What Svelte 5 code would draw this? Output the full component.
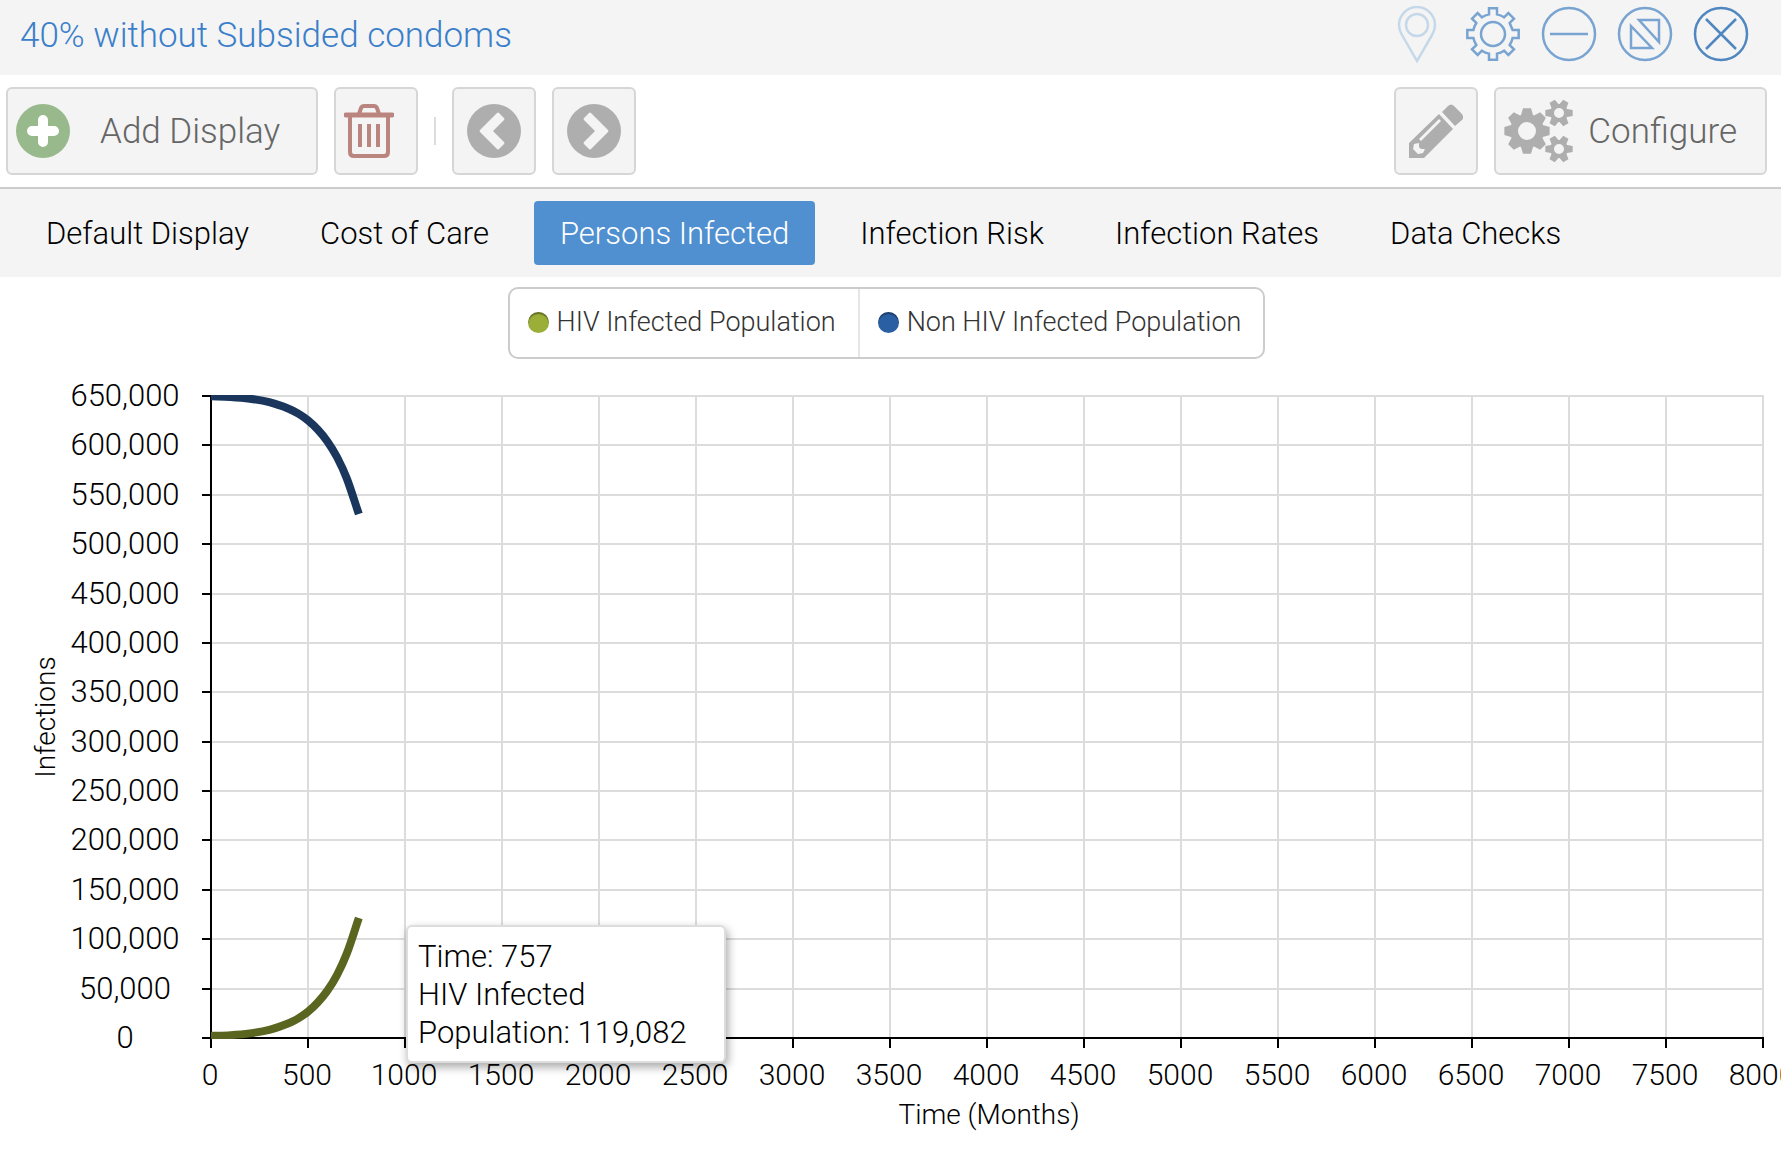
<script>
  const tabs = ['Default Display', 'Cost of Care', 'Persons Infected', 'Infection Risk', 'Infection Rates', 'Data Checks'];
  let active = $state(2);

  const legend = [
    { name: 'HIV Infected Population', tone: 'olive' },
    { name: 'Non HIV Infected Population', tone: 'blue' }
  ];

  // Infected persons by month; the healthy population is the remainder.
  const population = 652000;
  const maxY = 650000;
  const infected = [
    [0, 2200], [100, 2900], [200, 4700], [300, 8300], [400, 14900], [450, 19900], [500, 26700],
    [550, 36000], [600, 48000], [650, 64000], [700, 85500], [762, 121500]
  ];

  let width = $state(1781);
  const left = 211;
  const top = 30;
  const bottom = 672;
  const maxX = 8000;
  let right = $derived(width - 18);
  const x = (t) => left + (t / maxX) * (right - left);
  const y = (v) => bottom - (v / maxY) * (bottom - top);

  const xTicks = Array.from({ length: 17 }, (_, i) => i * 500);
  const yTicks = Array.from({ length: 14 }, (_, i) => i * 50000);

  // Smooth curve through the points; handles follow the slope so uneven steps stay smooth.
  function curve(points) {
    const last = points.length - 1;
    const slope = points.map((p, i) => {
      const a = points[Math.max(i - 1, 0)];
      const b = points[Math.min(i + 1, last)];
      return (b[1] - a[1]) / (b[0] - a[0]);
    });
    let d = `M${points[0][0]} ${points[0][1]}`;
    for (let i = 0; i < last; i++) {
      const [x0, y0] = points[i];
      const [x1, y1] = points[i + 1];
      const h = (x1 - x0) / 3;
      d += `C${x0 + h} ${y0 + h * slope[i]} ${x1 - h} ${y1 - h * slope[i + 1]} ${x1} ${y1}`;
    }
    return d;
  }
  let sickPath = $derived(curve(infected.map(([t, v]) => [x(t), y(v)])));
  let healthyPath = $derived(curve(infected.map(([t, v]) => [x(t), y(population - v)])));

  // Outline of a cog: n teeth, tip radius, root radius, half widths at tip and root.
  function cog(cx, cy, n, tip, root, tipHalf, rootHalf, turn = 0) {
    let d = '';
    for (let i = 0; i < n; i++) {
      const a = turn + (i * 2 * Math.PI) / n;
      const at = (r, h) => {
        const along = Math.sqrt(r * r - h * h);
        return `${(cx + along * Math.cos(a) - h * Math.sin(a)).toFixed(2)} ${(cy + along * Math.sin(a) + h * Math.cos(a)).toFixed(2)}`;
      };
      d += i ? `A${root} ${root} 0 0 1 ${at(root, -rootHalf)}` : `M${at(root, -rootHalf)}`;
      d += `L${at(tip, -tipHalf)}L${at(tip, tipHalf)}L${at(root, rootHalf)}`;
    }
    return d + 'Z';
  }
  const hole = (cx, cy, r) => `M${cx - r} ${cy}a${r} ${r} 0 1 0 ${2 * r} 0a${r} ${r} 0 1 0 ${-2 * r} 0Z`;
  const headerCog = cog(28, 28, 8, 26, 20, 4, 4);
  const cogs =
    cog(23, 33, 8, 23, 17, 4, 6) + hole(23, 33, 9) +
    cog(55, 15, 6, 14, 9, 3, 4) + hole(55, 15, 5) +
    cog(55, 51, 6, 14, 9, 3, 4) + hole(55, 51, 5);
</script>

<main>
  <header>
    <h1>40% without Subsided condoms</h1>
    <div class="window-tools">
      <button class="faded" aria-label="Pin">
        <svg viewBox="0 0 56 60"><path d="M28 55L13 29Q10 24 10 19a18 18 0 0 1 36 0Q46 24 43 29Z" /><circle cx="28" cy="19" r="11" /></svg>
      </button>
      <button aria-label="Settings">
        <svg viewBox="0 0 56 56"><path d={headerCog} /><circle cx="28" cy="28" r="12" /></svg>
      </button>
      <button aria-label="Minimize">
        <svg viewBox="0 0 56 56"><circle cx="28" cy="28" r="26" /><path d="M9 28H47" /></svg>
      </button>
      <button aria-label="Maximize">
        <svg viewBox="0 0 56 56"><circle cx="28" cy="28" r="26" /><path d="M22 14H42V36ZM14 20V42H35Z" /></svg>
      </button>
      <button class="strong" aria-label="Close">
        <svg viewBox="0 0 56 56"><circle cx="28" cy="28" r="26" /><path d="M13 13L43 43M43 13L13 43" /></svg>
      </button>
    </div>
  </header>

  <div class="toolbar">
    <button class="tool add">
      <svg width="54" height="54" viewBox="0 0 54 54"><circle cx="27" cy="27" r="27" fill="#97b98b" /><path d="M27 16V38M16 27H38" stroke="#fff" stroke-width="10" stroke-linecap="round" /></svg>
      <span>Add Display</span>
    </button>
    <button class="tool square start" aria-label="Delete display">
      <svg width="50" height="56" viewBox="0 0 50 56" fill="none" stroke="#bb857f">
        <path d="M2 12H48" stroke-width="5" stroke-linecap="round" />
        <path d="M15 11L17 5Q18 3 20 3H30Q32 3 33 5L35 11M6 13V49Q6 53 10 53H40Q44 53 44 49V13" stroke-width="4" />
        <path d="M16 21V44M25 21V44M34 21V44" stroke-width="4" />
      </svg>
    </button>
    <i class="separator"></i>
    <button class="tool square" aria-label="Previous">
      <svg width="54" height="54" viewBox="0 0 54 54"><circle cx="27" cy="27" r="27" fill="#aeaeae" /><path d="M30 9Q31 8 32 9L37 14Q38 15 37 16L26 27L37 38Q38 39 37 40L32 45Q31 46 30 45L13 28Q12 27 13 26Z" fill="#f4f4f4" /></svg>
    </button>
    <button class="tool square" aria-label="Next">
      <svg width="54" height="54" viewBox="0 0 54 54"><circle cx="27" cy="27" r="27" fill="#aeaeae" /><path d="M24 9Q23 8 22 9L17 14Q16 15 17 16L28 27L17 38Q16 39 17 40L22 45Q23 46 24 45L41 28Q42 27 41 26Z" fill="#f4f4f4" /></svg>
    </button>
    <span class="spacer"></span>
    <button class="tool square" aria-label="Edit">
      <svg width="54" height="54" viewBox="0 0 54 54" fill="#aeaeae">
        <path d="M33 8L39 2Q42 -1 45 2L52 9Q56 13 53 16L46 22Z" />
        <path fill-rule="evenodd" d="M30 10L44 25L15 54H0V39ZM30 15L10 35L12 37L32 17ZM5 40L4 45L9 50L14 49L16 45L12 45L10 43V39Z" />
      </svg>
    </button>
    <button class="tool configure">
      <svg width="69" height="66" viewBox="0 0 69 66" fill="#aeaeae"><path fill-rule="evenodd" d={cogs} /></svg>
      <span>Configure</span>
    </button>
  </div>

  <nav>
    {#each tabs as tab, i}
      <button class:active={i === active} onclick={() => (active = i)}>{tab}</button>
    {/each}
  </nav>

  <div class="legend-row">
    <ul class="legend">
      {#each legend as item}
        <li><i class={item.tone}></i>{item.name}</li>
      {/each}
    </ul>
  </div>

  <div class="chart" bind:clientWidth={width}>
    <svg class="plot" height="790" role="img" aria-label="Infections by time in months">
      <defs>
        <clipPath id="plot-area"><rect x={left} y={top - 1} width={right - left} height={bottom - top + 2} /></clipPath>
      </defs>
      <g class="grid">
        {#each xTicks.slice(1) as t}<line x1={Math.round(x(t))} x2={Math.round(x(t))} y1={top - 1} y2={bottom} />{/each}
        {#each yTicks.slice(1) as v}<line x1={left} x2={right} y1={Math.round(y(v))} y2={Math.round(y(v))} />{/each}
      </g>
      <g class="axis">
        <line x1={left} x2={left} y1={top - 1} y2={bottom} />
        <line x1={left} x2={right + 1} y1={bottom} y2={bottom} />
        {#each xTicks as t}
          <line x1={Math.round(x(t))} x2={Math.round(x(t))} y1={bottom} y2={bottom + 10} />
          <text x={x(t) - 1} y={bottom + 47}>{t}</text>
        {/each}
        {#each yTicks as v}
          <line x1={left - 9} x2={left} y1={Math.round(y(v))} y2={Math.round(y(v))} />
          <text class="amount" x="125" y={y(v) + 10}>{v.toLocaleString('en-US')}</text>
        {/each}
      </g>
      <g class="series" clip-path="url(#plot-area)">
        <path class="sick" d={sickPath} />
        <path class="healthy" d={healthyPath} />
      </g>
      <text class="title" x={(left + right) / 2 + 2} y={bottom + 86}>Time (Months)</text>
      <text class="title" transform="translate(55 351) rotate(-90)">Infections</text>
    </svg>
    <div class="tooltip" role="tooltip">Time: 757<br />HIV Infected<br />Population: 119,082</div>
  </div>
</main>

<style>
  :global(body) {
    margin: 0;
    background: #fff;
  }
  main {
    font-family: Roboto, 'Liberation Sans', sans-serif;
    font-weight: 300;
    font-size: 31px;
    color: #000;
    overflow: hidden;
  }
  button {
    font: inherit;
    color: inherit;
    margin: 0;
    padding: 0;
    border: 0;
    background: none;
    cursor: pointer;
    white-space: nowrap;
  }
  svg {
    display: block;
    flex: none;
  }
  header {
    display: flex;
    justify-content: space-between;
    height: 75px;
    padding: 0 32px 0 20px;
    background: #f4f4f4;
  }
  h1 {
    margin: 0;
    font-size: 35px;
    font-weight: 300;
    line-height: 72px;
    color: #3b7fca;
  }
  .window-tools {
    display: flex;
    gap: 20px;
    padding-top: 6px;
  }
  .window-tools button {
    height: 60px;
    display: flex;
    align-items: flex-start;
  }
  .window-tools svg {
    width: 56px;
    fill: none;
    stroke: #79a4d2;
    stroke-width: 2.5;
  }
  .window-tools .faded svg {
    stroke: #c5d8ea;
  }
  .window-tools .strong svg {
    stroke: #5187c1;
  }
  .toolbar {
    display: flex;
    align-items: center;
    gap: 16px;
    padding: 12px 14px 12px 6px;
    border-bottom: 2px solid #ccc;
  }
  .tool {
    box-sizing: border-box;
    display: flex;
    align-items: center;
    height: 88px;
    border: 2px solid #d6d6d6;
    border-radius: 6px;
    background: #f4f4f4;
    color: #666;
    font-size: 35px;
  }
  .add {
    gap: 30px;
    padding: 0 36px 0 8px;
  }
  .square {
    justify-content: center;
    width: 84px;
  }
  .start {
    justify-content: flex-start;
    padding-left: 8px;
  }
  .configure {
    gap: 15px;
    padding: 0 28px 0 8px;
  }
  .separator {
    width: 2px;
    height: 28px;
    background: #ddd;
  }
  .spacer {
    flex: 1;
  }
  nav {
    display: flex;
    gap: 19px;
    padding: 12px 20px;
    background: #f4f4f4;
  }
  nav button {
    height: 64px;
    padding: 0 26px;
    border-radius: 4px;
  }
  nav .active {
    background: #5090d0;
    color: #fff;
  }
  .legend-row {
    display: flex;
    justify-content: center;
    padding: 10px 8px 7px 0;
  }
  .legend {
    display: flex;
    margin: 0;
    padding: 0;
    list-style: none;
    border: 2px solid #ccc;
    border-radius: 10px;
    font-size: 27px;
    color: #333;
  }
  .legend li {
    box-sizing: border-box;
    display: flex;
    align-items: center;
    gap: 8px;
    height: 68px;
    padding: 0 22px 2px 18px;
  }
  .legend li + li {
    border-left: 2px solid #e6e6e6;
  }
  .legend i {
    width: 21px;
    height: 21px;
    border-radius: 50%;
    box-shadow: inset 0 2px 1px rgba(0, 0, 0, 0.35);
  }
  .olive {
    background: #9aae38;
  }
  .blue {
    background: #2b5fa4;
  }
  .chart {
    position: relative;
  }
  .plot {
    width: 100%;
  }
  .grid line {
    stroke: #dcdcdc;
    stroke-width: 2;
  }
  .axis line {
    stroke: #000;
    stroke-width: 2;
  }
  text {
    text-anchor: middle;
    font-size: 30px;
  }
  .amount {
    font-size: 31px;
  }
  .title {
    font-size: 28px;
  }
  .series path {
    fill: none;
    stroke-width: 8;
  }
  .sick {
    stroke: #5a661f;
  }
  .healthy {
    stroke: #1a365d;
  }
  .tooltip {
    position: absolute;
    left: 406px;
    top: 559px;
    box-sizing: border-box;
    width: 320px;
    padding: 11px 10px 9px;
    border: 2px solid #ddd;
    border-radius: 6px;
    background: #fff;
    box-shadow: 2px 4px 10px rgba(0, 0, 0, 0.35);
    line-height: 38px;
    white-space: nowrap;
  }
</style>
